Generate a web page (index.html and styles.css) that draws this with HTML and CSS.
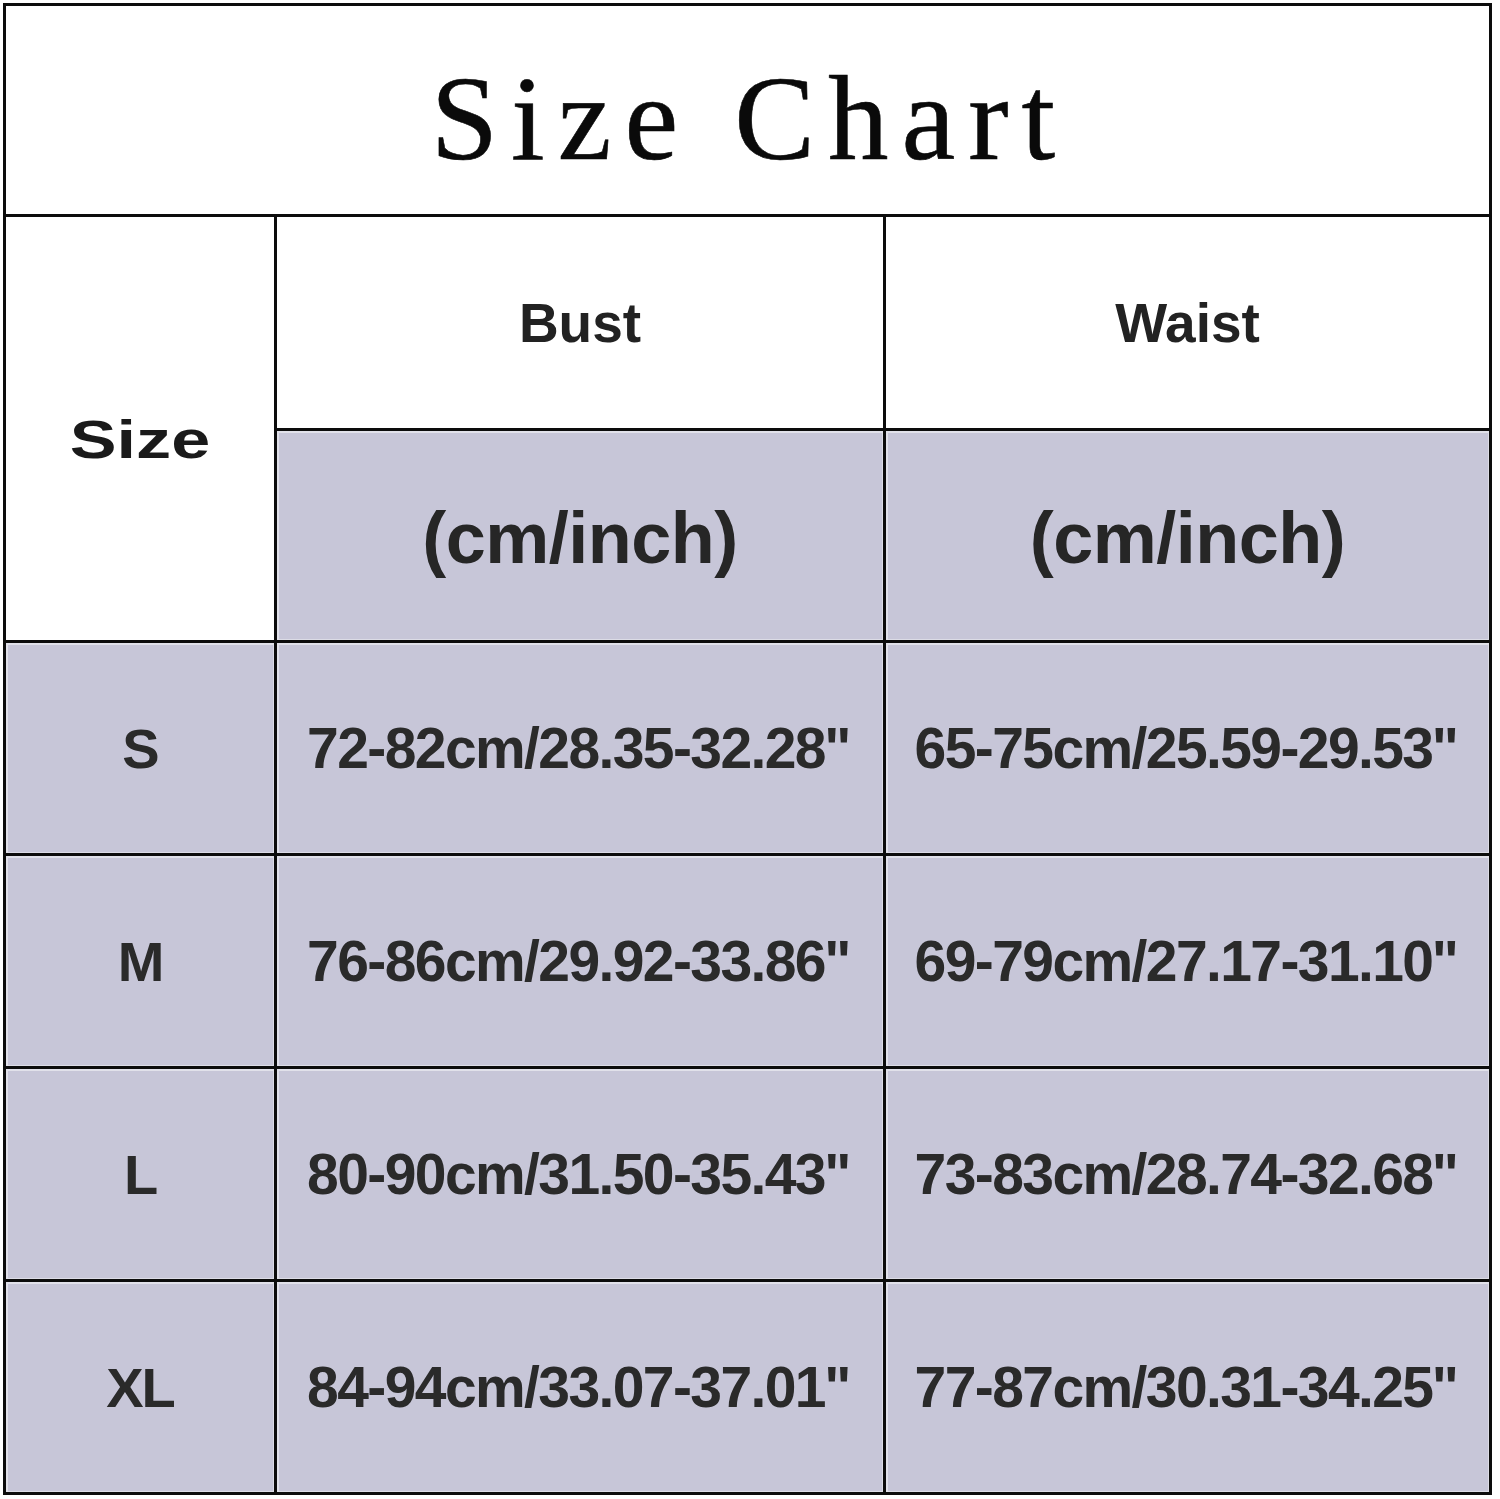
FILE: index.html
```html
<!DOCTYPE html>
<html lang="en">
<head>
<meta charset="utf-8">
<title>Size Chart</title>
<link rel="stylesheet" href="styles.css">
</head>
<body>
<div class="chart">
  <div class="cell title"><span>Size Chart</span></div>
  <div class="cell size-head"><span class="stretch">Size</span></div>
  <div class="cell head">Bust</div>
  <div class="cell head">Waist</div>
  <div class="cell unit gray">(cm/inch)</div>
  <div class="cell unit gray">(cm/inch)</div>

  <div class="cell gray label">S</div>
  <div class="cell gray value">72-82cm/28.35-32.28''</div>
  <div class="cell gray value">65-75cm/25.59-29.53''</div>

  <div class="cell gray label">M</div>
  <div class="cell gray value">76-86cm/29.92-33.86''</div>
  <div class="cell gray value">69-79cm/27.17-31.10''</div>

  <div class="cell gray label">L</div>
  <div class="cell gray value">80-90cm/31.50-35.43''</div>
  <div class="cell gray value">73-83cm/28.74-32.68''</div>

  <div class="cell gray label">XL</div>
  <div class="cell gray value">84-94cm/33.07-37.01''</div>
  <div class="cell gray value">77-87cm/30.31-34.25''</div>
</div>
</body>
</html>
```
FILE: styles.css
```css
html, body {
  margin: 0;
  padding: 0;
  background: #ffffff;
}

body {
  font-family: "Liberation Sans", Arial, sans-serif;
  color: #262626;
}

.chart {
  margin: 3px 0 0 3px;
  width: 1489px;
  box-sizing: border-box;
  padding: 3px;
  background: #0c0c0c;
  display: grid;
  grid-template-columns: 268px 606px 603px;
  grid-template-rows: 208px 211px 209px 210px 210px 210px 210px;
  gap: 3px;
}

.cell {
  background: #ffffff;
  display: flex;
  align-items: center;
  justify-content: center;
  font-weight: bold;
  white-space: nowrap;
}

.gray {
  background: #c7c6d8;
  box-shadow: inset 1px 1px 0 1px #e1e1ea, inset -1px -1px 0 0 #dcdce6;
}

.title {
  grid-column: 1 / 4;
  font-family: "Liberation Serif", "Times New Roman", serif;
  font-weight: normal;
  font-size: 121px;
  color: #0a0a0a;
  letter-spacing: 13px;
  padding-top: 16px;
  padding-left: 4px;
  box-sizing: border-box;
  -webkit-text-stroke: 0.6px #0a0a0a;
}

.size-head {
  grid-row: 2 / 4;
  font-size: 54px;
  padding-top: 20px;
  padding-left: 0;
  box-sizing: border-box;
  color: #1a1a1a;
}

.stretch {
  display: inline-block;
  transform: scaleX(1.3);
}

.head {
  font-size: 55px;
  color: #222222;
}

.unit {
  font-size: 72px;
  letter-spacing: -0.5px;
  color: #262626;
  padding-top: 4px;
  box-sizing: border-box;
}

.label {
  font-size: 56px;
  color: #2a2a2a;
  letter-spacing: -2px;
}

.value {
  font-size: 57px;
  letter-spacing: -1.6px;
  color: #2a2a2a;
  padding-right: 4px;
  box-sizing: border-box;
}
```
